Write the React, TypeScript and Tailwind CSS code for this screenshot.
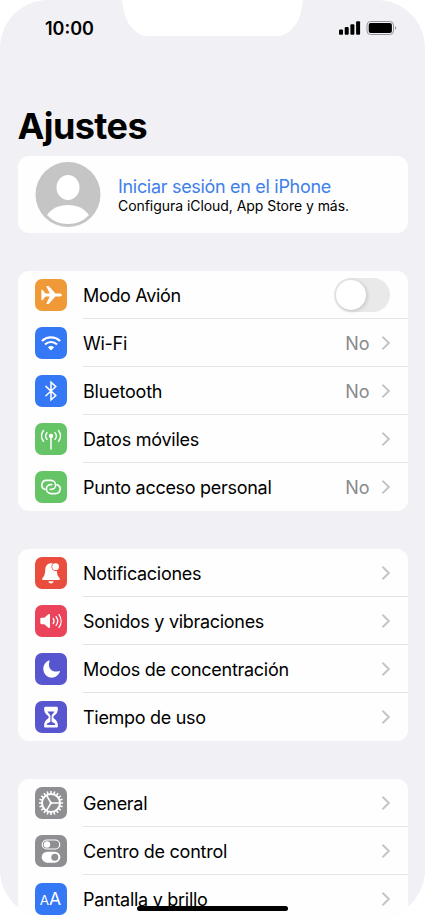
import type { ReactNode } from 'react';

interface SettingRow {
  label: string;
  tile: string;
  icon: ReactNode;
  tracking: string;
  value?: string;
  toggle?: boolean;
}

const GEAR_TEETH = Array.from({ length: 20 }, (_, i) => i * 18);

const AirplaneIcon = () => (
  <path
    fill="#fff"
    d="M6.4 10.8h.7c.4 0 .7.2 1 .6l2.4 3.1h4.3L11.6 8c-.3-.6-.1-1.1.5-1.1h1c.5 0 .8.2 1.1.5l6.2 7.1h3.7c1.5 0 2.9.6 2.9 1.5s-1.4 1.5-2.9 1.5h-3.7l-6.2 7.1c-.3.3-.6.5-1.1.5h-1c-.6 0-.8-.5-.5-1.1l3.2-6.5h-4.3l-2.4 3.1c-.3.4-.6.6-1 .6h-.7V16z"
  />
);

const WifiIcon = () => (
  <>
    <path
      fill="none"
      stroke="#fff"
      strokeWidth="2.1"
      d="M6.9 14.1a12.9 12.9 0 0 1 18.2 0M10 17.5a8.5 8.5 0 0 1 12 0"
    />
    <path fill="#fff" d="M12.9 20.3a4.4 4.4 0 0 1 6.2 0L16 23.5z" />
  </>
);

const BluetoothIcon = () => (
  <path
    fill="none"
    stroke="#fff"
    strokeWidth="1.5"
    strokeLinecap="round"
    d="M10.9 11.4l9.9 9.1-4.8 4.4V7.2l4.8 4.4-9.9 9.1"
  />
);

const AntennaIcon = () => (
  <>
    <circle cx="16" cy="12.9" r="2.2" fill="#fff" />
    <path
      fill="none"
      stroke="#fff"
      strokeWidth="1.5"
      strokeLinecap="round"
      d="M16 14v12M12 9.7a4.9 4.9 0 0 0 0 6.6M20 9.7a4.9 4.9 0 0 1 0 6.6M8.5 7.5a8.6 8.6 0 0 0 0 10.8M23.5 7.5a8.6 8.6 0 0 1 0 10.8"
    />
  </>
);

// two interlocking loops
const HotspotIcon = () => (
  <path
    fill="none"
    stroke="#fff"
    strokeWidth="1.6"
    strokeLinecap="round"
    d="M9.8 18.3a4.6 4.6 0 0 1 1.4-8.9H16a4.6 4.6 0 0 1 4.6 4.6c0 2.6-2 4.4-4.2 4.4h-1.2M22.2 13.7a4.6 4.6 0 0 1-1.4 8.9H16a4.6 4.6 0 0 1-4.6-4.6c0-2.6 2-4.4 4.2-4.4h1.2"
  />
);

const BellIcon = () => (
  <>
    <path
      fill="#fff"
      d="M16 6.2c-3.3 0-5.5 2.5-5.7 6-.2 4.3-.8 6.3-2.2 8-.7.8-1 1.3-1 1.8 0 .7.5 1.1 1.2 1.1h15.4c.7 0 1.2-.4 1.2-1.1 0-.5-.3-1-1-1.8-1.4-1.7-2-3.7-2.2-8-.2-3.5-2.4-6-5.7-6zM13.4 24.2h5.2c-.2 1.4-1.2 2.2-2.6 2.2s-2.4-.8-2.6-2.2z"
    />
    <circle cx="20.6" cy="9.7" r="4.2" fill="#ea4d3d" />
    <circle cx="20.6" cy="9.7" r="3.4" fill="#fff" />
  </>
);

const SpeakerIcon = () => (
  <>
    <path
      fill="#fff"
      d="M6.7 12.8h2.6l4-3.5c.9-.7 1.7-.4 1.7.6v12.2c0 1-.8 1.3-1.7.6l-4-3.5H6.7c-.9 0-1.4-.5-1.4-1.4v-3.6c0-.9.5-1.4 1.4-1.4z"
    />
    <path
      fill="none"
      stroke="#fff"
      strokeWidth="1.3"
      strokeLinecap="round"
      d="M18.2 13.5a4.3 4.3 0 0 1 0 5M21.1 11.6a7.4 7.4 0 0 1 0 8.8M24 9.6a10.8 10.8 0 0 1 0 12.8"
    />
  </>
);

const MoonIcon = () => (
  <path
    fill="#fff"
    d="M13.9 7.5c.5-.2.9.2.7.7-.5 1.1-.7 2.2-.7 3.4 0 4.3 2.9 7 7.1 7 1.2 0 2.3-.2 3.3-.6.5-.2.9.1.7.6-1.4 3.7-4.7 6.1-8.6 6.1a8.6 8.6 0 0 1-8.1-8.8c0-3.8 2.2-7.1 5.6-8.4z"
  />
);

const HourglassIcon = () => (
  <>
    <path
      fill="#fff"
      d="M10.6 5.7h10.8c1 0 1.5.6 1.5 1.5 0 3.6-1.2 5.8-3.6 7.3-.7.5-1 .9-1 1.6s.3 1.2 1 1.6c2.4 1.6 3.6 3.7 3.6 7.3 0 1-.5 1.6-1.5 1.6H10.6c-1 0-1.5-.6-1.5-1.6 0-3.6 1.2-5.7 3.6-7.3.7-.4 1-.9 1-1.6s-.3-1.1-1-1.6c-2.4-1.5-3.6-3.7-3.6-7.3 0-.9.5-1.5 1.5-1.5z"
    />
    <path
      fill="#5856ce"
      d="M12.5 10.6h7c-.4.9-1.1 1.7-1.9 2.3-.7.5-1 1.3-1 2.3v4.7c0 .7.2 1 .8 1.3l2.4 1.4c.8.5.7 1.4-.3 1.4h-7c-1 0-1.1-.9-.3-1.4l2.4-1.4c.6-.3.8-.6.8-1.3v-4.7c0-1-.3-1.8-1-2.3-.8-.6-1.5-1.4-1.9-2.3z"
    />
  </>
);

const GearIcon = () => (
  <g stroke="#fff" fill="none">
    <circle cx="16" cy="16" r="9" strokeWidth="2" />
    {GEAR_TEETH.map((angle) => (
      <path key={angle} strokeWidth="1.6" d="M16 6.5V3.9" transform={`rotate(${angle} 16 16)`} />
    ))}
    <path strokeWidth="1.5" d="M16 16h8.5M16 16l-4.3-7.4M16 16l-4.3 7.4" />
    <circle cx="16" cy="16" r="1.3" fill="#fff" stroke="none" />
  </g>
);

const ControlIcon = () => (
  <>
    <rect x="7.3" y="5" width="17.4" height="9" rx="4.5" fill="none" stroke="#fff" strokeWidth="1.2" />
    <circle cx="12" cy="9.5" r="3.2" fill="#fff" />
    <rect x="6.7" y="16.7" width="18.6" height="11" rx="5.5" fill="#fff" />
    <circle cx="19.8" cy="22.2" r="3.5" fill="#8e8e93" />
  </>
);

const TextSizeIcon = () => (
  <g fill="#fff" fontFamily="Inter, sans-serif">
    <text x="4.7" y="22.3" fontSize="13.5">A</text>
    <text x="14" y="22.3" fontSize="17.5">A</text>
  </g>
);

const GROUPS: SettingRow[][] = [
  [
    { label: 'Modo Avión', tile: 'bg-[#f09a37]', icon: <AirplaneIcon />, tracking: 'tracking-[-0.32px]', toggle: true },
    { label: 'Wi-Fi', tile: 'bg-[#3478f6]', icon: <WifiIcon />, tracking: 'tracking-[-0.28px]', value: 'No' },
    { label: 'Bluetooth', tile: 'bg-[#3478f6]', icon: <BluetoothIcon />, tracking: 'tracking-[-0.2px]', value: 'No' },
    { label: 'Datos móviles', tile: 'bg-[#65c466]', icon: <AntennaIcon />, tracking: 'tracking-[-0.24px]' },
    { label: 'Punto acceso personal', tile: 'bg-[#65c466]', icon: <HotspotIcon />, tracking: 'tracking-[-0.29px]', value: 'No' },
  ],
  [
    { label: 'Notificaciones', tile: 'bg-[#ea4d3d]', icon: <BellIcon />, tracking: 'tracking-[-0.29px]' },
    { label: 'Sonidos y vibraciones', tile: 'bg-[#eb445a]', icon: <SpeakerIcon />, tracking: 'tracking-[-0.3px]' },
    { label: 'Modos de concentración', tile: 'bg-[#5856ce]', icon: <MoonIcon />, tracking: 'tracking-[-0.28px]' },
    { label: 'Tiempo de uso', tile: 'bg-[#5856ce]', icon: <HourglassIcon />, tracking: 'tracking-[-0.3px]' },
  ],
  [
    { label: 'General', tile: 'bg-[#8e8e93]', icon: <GearIcon />, tracking: 'tracking-[-0.3px]' },
    { label: 'Centro de control', tile: 'bg-[#8e8e93]', icon: <ControlIcon />, tracking: 'tracking-[-0.25px]' },
    { label: 'Pantalla y brillo', tile: 'bg-[#3478f6]', icon: <TextSizeIcon />, tracking: 'tracking-[-0.28px]' },
  ],
];

const Chevron = () => (
  <svg className="ml-3 h-3.5 w-2" viewBox="0 0 8 14" fill="none" stroke="#c4c4c7" strokeWidth="1.9" strokeLinecap="round" strokeLinejoin="round">
    <path d="M1 1.3L6.9 7 1 12.7" />
  </svg>
);

const StatusBar = () => (
  <div className="relative flex h-14 items-center justify-between pl-[45px] pr-[28px]">
    <svg className="absolute left-[122px] top-0 h-9 w-[181px]" viewBox="0 0 181 36" fill="#fff">
      <path d="M0 0h181c-1.5 12-4 22-11 29-4.5 4.5-9 7-15 7H26c-6 0-10.5-2.5-15-7C4 22 1.5 12 0 0z" />
    </svg>
    <span className="pt-0.5 text-[18px] font-semibold leading-none">10:00</span>
    <svg className="h-4 w-[58px]" viewBox="0 0 58 16">
      <rect x="0" y="9.5" width="4" height="5.3" rx="1" />
      <rect x="5.7" y="7" width="4" height="7.8" rx="1" />
      <rect x="11.4" y="4.2" width="4" height="10.6" rx="1" />
      <rect x="17.1" y="1.2" width="4" height="13.6" rx="1" />
      <rect x="28" y="1.5" width="26.5" height="13" rx="3.6" fill="none" stroke="#96969a" />
      <rect x="29.7" y="3.1" width="23.2" height="9.9" rx="2" />
      <path d="M56 6c1.6.6 1.6 3.4 0 4z" fill="#96969a" />
    </svg>
  </div>
);

const Toggle = () => (
  <span className="flex h-[34px] w-14 items-center rounded-full bg-[#e9e9ea] p-0.5">
    <span className="size-[30px] rounded-full bg-white shadow-[1px_1px_4px_rgba(0,0,0,0.18)]" />
  </span>
);

export default function App() {
  return (
    <div className="h-[920px] w-[425px] overflow-hidden bg-white font-[Inter,sans-serif] text-black">
      <main className="relative h-[918px] overflow-hidden rounded-[48px] bg-[#f1f0f5]">
        <StatusBar />
        <h1 className="mt-12 pl-[17.5px] text-[36px] font-bold leading-[44px] tracking-[-0.6px]">Ajustes</h1>

        <section className="mx-[17.5px] mt-2 flex h-[77px] items-center rounded-[11px] bg-[#fefefe] pl-[17px]">
          <svg className="size-[66px]" viewBox="0 0 66 66">
            <circle cx="33" cy="32.5" r="32.5" fill="#c5c5c5" />
            <ellipse cx="33" cy="25.5" rx="11.5" ry="12.5" fill="#fff" />
            <path d="M12 53C16.5 46.5 24 43 33 43s16.5 3.5 21 10c-5.5 6-12.5 9-21 9s-15.5-3-21-9z" fill="#fff" />
          </svg>
          <div className="ml-[17.5px] mt-0.5">
            <p className="whitespace-nowrap text-[18px] leading-5 tracking-[-0.31px] text-[#3f80ea]">Iniciar sesión en el iPhone</p>
            <p className="whitespace-nowrap text-[14px] leading-[18px] tracking-[-0.05px]">Configura iCloud, App Store y más.</p>
          </div>
        </section>

        {GROUPS.map((rows) => (
          <section key={rows[0].label} className="mx-[17.5px] mt-[38px] overflow-hidden rounded-[11px] bg-[#fefefe]">
            {rows.map((row, i) => (
              <div key={row.label} className="flex h-12 items-center pl-[17px]">
                <svg className={`mb-px size-8 shrink-0 rounded-[7px] ${row.tile}`} viewBox="0 0 32 32">
                  {row.icon}
                </svg>
                <div
                  className={`ml-4 flex h-12 flex-1 items-center border-b pr-[18px] ${i < rows.length - 1 ? 'border-[#e4e4e6]' : 'border-transparent'}`}
                >
                  <span className={`flex-1 whitespace-nowrap pl-[0.5px] pt-0.5 text-[18px] leading-6 ${row.tracking}`}>{row.label}</span>
                  {row.value && <span className="pt-0.5 text-[18px] leading-6 text-[#8a8a8d]">{row.value}</span>}
                  {row.toggle ? <Toggle /> : <Chevron />}
                </div>
              </div>
            ))}
          </section>
        ))}

        <div className="absolute left-[137px] top-[906px] h-[5px] w-[151px] rounded-full bg-black" />
      </main>
    </div>
  );
}
